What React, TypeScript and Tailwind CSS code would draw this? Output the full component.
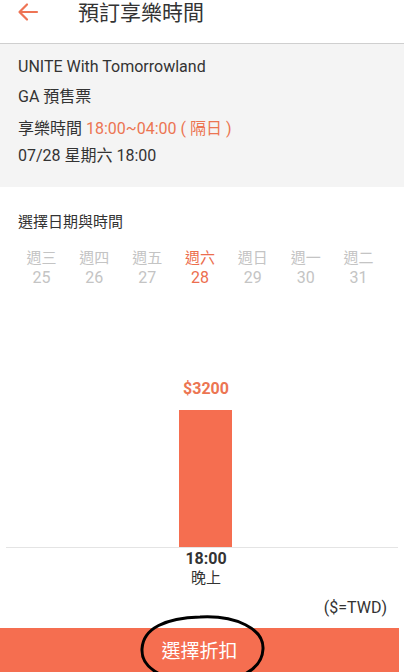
import React from "react";

const days = [
  { w: "週三", d: "25" },
  { w: "週四", d: "26" },
  { w: "週五", d: "27" },
  { w: "週六", d: "28", active: true },
  { w: "週日", d: "29" },
  { w: "週一", d: "30" },
  { w: "週二", d: "31" },
];

export default function App() {
  return (
    <div
      className="relative w-[404px] h-[672px] overflow-hidden bg-white text-[#333]"
      style={{ fontFamily: 'Roboto, "Noto Sans CJK TC", sans-serif' }}
    >
      {/* Header */}
      <div className="h-[44px] flex items-start border-b border-[#cfcfcf]">
        <div className="w-[78px] pl-[17px] pt-[2px]">
          <svg width="22" height="20" viewBox="0 0 22 20" fill="none">
            <path d="M20 10H3M10 2.5L2.5 10L10 17.5" stroke="#ee7455" strokeWidth="2.2" strokeLinecap="round" strokeLinejoin="round" />
          </svg>
        </div>
        <div className="text-[21px] leading-[26px] text-[#333]">預訂享樂時間</div>
      </div>

      {/* Info */}
      <div className="bg-[#f4f4f4] h-[143px] px-[18px] pt-[13px] text-[16px] text-[#333]">
        <div className="leading-[20px]">UNITE With Tomorrowland</div>
        <div className="leading-[20px] mt-[10px]">GA 預售票</div>
        <div className="leading-[20px] mt-[12px]">
          享樂時間 <span className="text-[#ec7552]">18:00~04:00 ( 隔日 )</span>
        </div>
        <div className="leading-[20px] mt-[7px]">07/28 星期六 18:00</div>
      </div>

      {/* Date select */}
      <div className="px-[18px] pt-[25px] text-[15px] leading-[20px] text-[#333]">選擇日期與時間</div>
      <div className="grid grid-cols-7 pl-[15px] w-[385px] mt-[17px]">
        {days.map((x) => (
          <div
            key={x.d}
            className={`flex flex-col items-center text-[15px] leading-[19px] ${x.active ? "text-[#ec6e4e]" : "text-[#c4c4c4]"}`}
          >
            <div>{x.w}</div>
            <div className="text-[16px]">{x.d}</div>
          </div>
        ))}
      </div>

      {/* Chart */}
      <div className="mt-[93px] pl-[8px] flex flex-col items-center">
        <div className="text-[16px] leading-[18px] font-bold text-[#ec7552]">$3200</div>
        <div className="mt-[12px] w-[53px] h-[137px] bg-[#f56e50] -ml-[2px]" />
      </div>
      <div className="mx-[6px] h-px bg-[#e4e4e4]" />
      <div className="flex flex-col items-center pl-[8px] mt-[1px] text-[16px] font-bold leading-[20px] text-[#333]">
        <div>18:00</div>
        <div className="font-normal text-[15px] leading-[19px]">晚上</div>
      </div>
      <div className="flex justify-end pr-[17px] mt-[11px] text-[16px] leading-[18px] text-[#333]">($=TWD)</div>

      {/* Button */}
      <div className="absolute left-0 top-[628px] w-[399px] h-[44px] bg-[#f56e50] flex items-center justify-center">
        <span className="text-[19px] text-white pt-[4px]">選擇折扣</span>
      </div>
      <svg className="absolute left-[136px] top-[612px]" width="134" height="76" viewBox="0 0 134 76" fill="none">
        <path
          d="M64 5 C 100 3, 128 17, 127 37 C 126 60, 98 71, 64 70 C 30 69, 5 58, 6 37 C 7 16, 30 6, 64 5 Z"
          stroke="#000"
          strokeWidth="3"
        />
      </svg>
    </div>
  );
}
